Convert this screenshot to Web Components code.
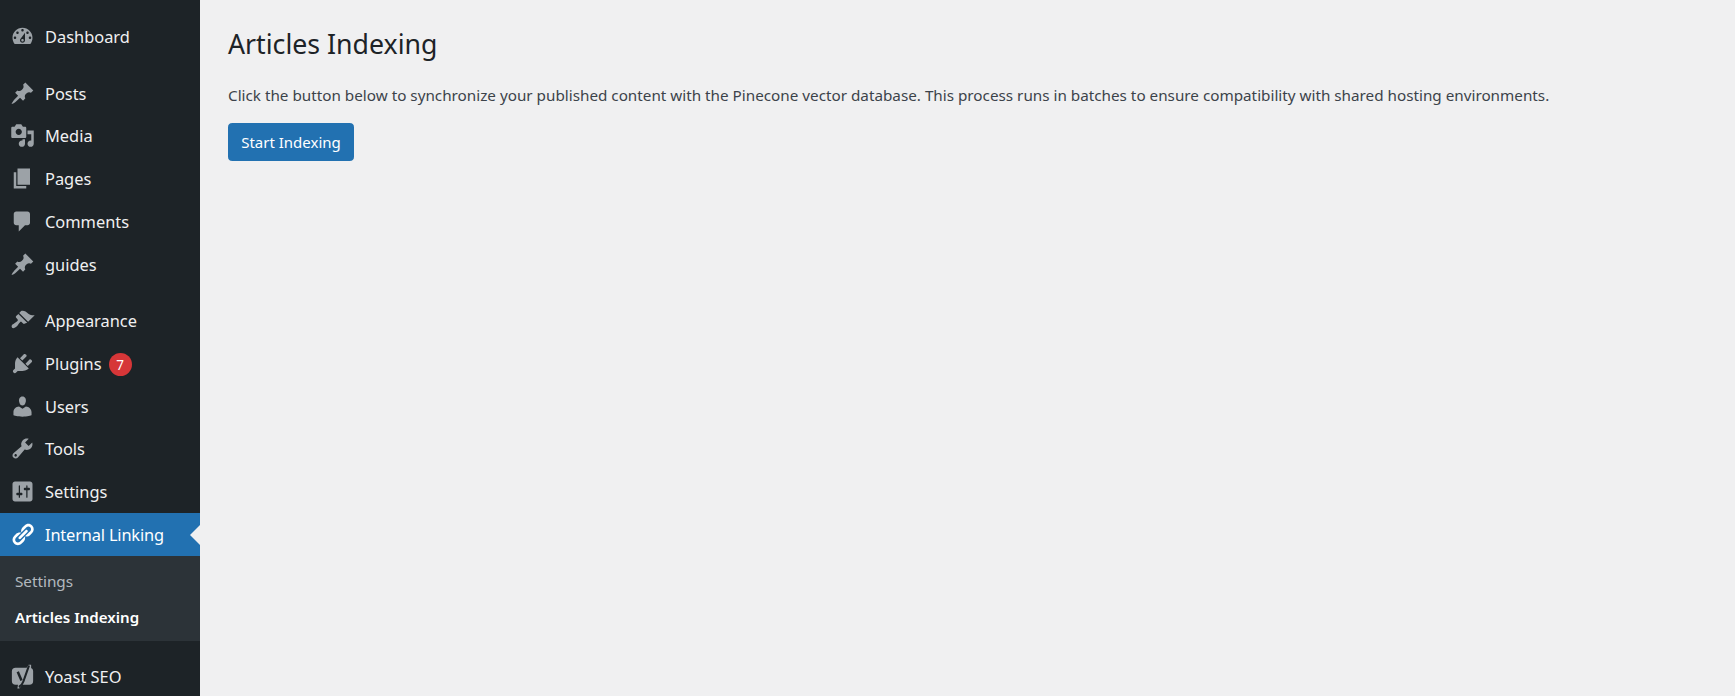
<!DOCTYPE html>
<html lang="en">
<head>
<meta charset="utf-8">
<title>Articles Indexing</title>
<style>
  html, body { margin: 0; height: 100%; overflow: hidden; background: #f0f0f1; }
  body { font-family: "Noto Sans", "Open Sans", sans-serif; }
</style>
</head>
<body>
<admin-shell>
  <admin-menu slot="menu">
    <menu-item icon="dashboard">Dashboard</menu-item>
    <menu-gap style="--gap: 14px"></menu-gap>
    <menu-item icon="post" style="--row: 42px">Posts</menu-item>
    <menu-item icon="media">Media</menu-item>
    <menu-item icon="page">Pages</menu-item>
    <menu-item icon="comments">Comments</menu-item>
    <menu-item icon="post">guides</menu-item>
    <menu-gap style="--gap: 13px"></menu-gap>
    <menu-item icon="appearance">Appearance</menu-item>
    <menu-item icon="plugins" badge="7">Plugins</menu-item>
    <menu-item icon="users" style="--row: 42px">Users</menu-item>
    <menu-item icon="tools">Tools</menu-item>
    <menu-item icon="settings">Settings</menu-item>
    <menu-item icon="links" active>Internal Linking</menu-item>
    <sub-menu>
      <sub-item>Settings</sub-item>
      <sub-item current>Articles Indexing</sub-item>
    </sub-menu>
    <menu-gap style="--gap: 14px"></menu-gap>
    <menu-item icon="yoast">Yoast SEO</menu-item>
  </admin-menu>
  <indexing-page heading="Articles Indexing">
    Click the button below to synchronize your published content with the Pinecone vector database. This process runs in batches to ensure compatibility with shared hosting environments.
    <primary-button slot="action">Start Indexing</primary-button>
  </indexing-page>
</admin-shell>

<script>
// dashicon paths, 20x20 box
const ICONS = {
  dashboard: '<path d="M3.76 16h12.48c1.1-1.37 1.76-3.11 1.76-5 0-4.42-3.58-8-8-8s-8 3.58-8 8c0 1.89.66 3.63 1.76 5zM10 4c.55 0 1 .45 1 1s-.45 1-1 1-1-.45-1-1 .45-1 1-1zM6 6c.55 0 1 .45 1 1s-.45 1-1 1-1-.45-1-1 .45-1 1-1zm8 0c.55 0 1 .45 1 1s-.45 1-1 1-1-.45-1-1 .45-1 1-1zm-5.37 5.55L12 7v6c0 1.1-.9 2-2 2s-2-.9-2-2c0-.57.24-1.08.63-1.45zM4 10c.55 0 1 .45 1 1s-.45 1-1 1-1-.45-1-1 .45-1 1-1zm12 0c.55 0 1 .45 1 1s-.45 1-1 1-1-.45-1-1 .45-1 1-1zm-5 3c0-.55-.45-1-1-1s-1 .45-1 1 .45 1 1 1 1-.45 1-1z"/>',
  post: '<path d="M10.44 3.02l1.82-1.82 6.36 6.35-1.83 1.82c-1.05-.68-2.48-.57-3.41.36l-.75.75c-.92.93-1.04 2.35-.35 3.41l-1.83 1.82-2.41-2.41-2.8 2.79c-.42.42-3.38 2.71-3.8 2.29s1.86-3.39 2.28-3.81l2.79-2.79L4.1 9.36l1.83-1.82c1.05.69 2.48.57 3.4-.36l.75-.75c.93-.92 1.05-2.35.36-3.41z"/>',
  media: '<path d="M13 11V4c0-.55-.45-1-1-1h-1.67L9 1H5L3.67 3H2c-.55 0-1 .45-1 1v7c0 .55.45 1 1 1h10c.55 0 1-.45 1-1zM7 4.5c1.38 0 2.5 1.12 2.5 2.5S8.38 9.5 7 9.5 4.5 8.38 4.5 7 5.62 4.5 7 4.5zM14 6h5v10.5c0 1.38-1.12 2.5-2.5 2.5S14 17.88 14 16.5s1.12-2.5 2.5-2.5c.17 0 .34.02.5.05V9h-3V6zm-4 8.05V13h2v3.5c0 1.38-1.12 2.5-2.5 2.5S7 17.88 7 16.5 8.12 14 9.5 14c.17 0 .34.02.5.05z"/>',
  page: '<path d="M6 15V2h10v13H6zm-1 1h8v2H3V5h2v11z"/>',
  comments: '<path d="M5 2h9c1.1 0 2 .9 2 2v7c0 1.1-.9 2-2 2h-2l-5 5v-5H5c-1.1 0-2-.9-2-2V4c0-1.1.9-2 2-2z"/>',
  appearance: '<path d="M14.48 11.06L7.41 3.99l1.5-1.5c.5-.56 2.3-.47 3.51.32 1.21.8 1.43 1.28 2.91 2.1 1.18.64 2.45 1.26 4.45.85zm-.71.71L6.7 4.7 4.93 6.47c-.39.39-.39 1.02 0 1.41l1.06 1.06c.39.39.39 1.03 0 1.42-.6.6-1.43 1.11-2.21 1.69-.35.26-.7.53-1.01.84C1.43 13.23.79 14.87 1.65 15.72c.86.86 2.5.22 3.84-1.12.31-.31.58-.66.84-1.01.58-.78 1.09-1.61 1.69-2.21.39-.39 1.03-.39 1.42 0l1.06 1.06c.39.39 1.02.39 1.41 0z"/>',
  plugins: '<path d="M13.11 4.36L9.87 7.6 8 5.73l3.24-3.24c.35-.34 1.05-.2 1.56.32.52.51.66 1.21.31 1.55zm-8 1.77l.91-1.12 9.01 9.01-1.19.84c-.71.71-2.63 1.16-3.82 1.16H6.14L4.9 17.26c-.59.59-1.54.59-2.12 0-.59-.58-.59-1.53 0-2.12l1.24-1.24v-3.88c0-1.13.4-3.19 1.09-3.89zm7.26 3.97l3.24-3.24c.34-.35 1.04-.21 1.55.31.52.51.66 1.21.31 1.55l-3.24 3.25z"/>',
  users: '<path d="M10 9.25c-2.27 0-2.73-3.44-2.73-3.44C7 4.02 7.82 2 9.97 2c2.16 0 2.98 2.02 2.71 3.81 0 0-.41 3.44-2.68 3.44zm0 2.57L12.72 10c2.39 0 4.52 2.33 4.52 4.53v2.49s-3.65 1.13-7.24 1.13c-3.65 0-7.24-1.13-7.24-1.13v-2.49c0-2.25 1.94-4.48 4.47-4.48z"/>',
  tools: '<path d="M16.68 9.77c-1.34 1.34-3.3 1.67-4.95.99l-5.41 6.52c-.99.99-2.59.99-3.58 0s-.99-2.59 0-3.57l6.52-5.42c-.68-1.65-.35-3.61.99-4.95 1.28-1.28 3.12-1.62 4.72-1.06l-2.89 2.89 2.82 2.82 2.86-2.87c.53 1.58.18 3.39-1.08 4.65zM3.81 16.21c.4.39 1.04.39 1.43 0 .4-.4.4-1.04 0-1.43-.39-.4-1.03-.4-1.43 0-.39.39-.39 1.03 0 1.43z"/>',
  settings: '<path d="M18 16V4c0-1.1-.9-2-2-2H4c-1.1 0-2 .9-2 2v12c0 1.1.9 2 2 2h12c1.1 0 2-.9 2-2zM8 11h1c.55 0 1 .45 1 1s-.45 1-1 1H8v1.5c0 .28-.22.5-.5.5s-.5-.22-.5-.5V13H6c-.55 0-1-.45-1-1s.45-1 1-1h1V5.5c0-.28.22-.5.5-.5s.5.22.5.5V11zm5-2h-1c-.55 0-1-.45-1-1s.45-1 1-1h1V5.5c0-.28.22-.5.5-.5s.5.22.5.5V7h1c.55 0 1 .45 1 1s-.45 1-1 1h-1v5.5c0 .28-.22.5-.5.5s-.5-.22-.5-.5V9z"/>',
  links: '<path d="M17.74 2.76c1.68 1.69 1.68 4.41 0 6.1l-1.53 1.52c-1.12 1.12-2.7 1.47-4.14 1.09l2.62-2.61.76-.77.76-.76c.84-.84.84-2.2 0-3.04-.84-.85-2.2-.85-3.04 0l-.77.76-3.38 3.38c-.37-1.44-.02-3.02 1.1-4.14l1.52-1.53c1.69-1.68 4.42-1.68 6.1 0zM8.59 13.43l5.34-5.34c.42-.42.42-1.1 0-1.52-.44-.43-1.13-.39-1.53 0l-5.33 5.34c-.42.42-.42 1.1 0 1.52.44.43 1.13.39 1.52 0zm-.76 2.29l4.14-4.15c.38 1.44.03 3.02-1.09 4.14l-1.52 1.53c-1.69 1.68-4.41 1.68-6.1 0-1.68-1.68-1.68-4.42 0-6.1l1.53-1.52c1.12-1.12 2.7-1.47 4.14-1.1l-4.14 4.15c-.85.84-.85 2.2 0 3.05.84.84 2.2.84 3.04 0z"/>',
  yoast: '<rect x="1.5" y="3" width="17" height="13.5" rx="3"/><path d="M13 3.5 14.9.5h2v3zM6.5 16l-.6 3.5h1.6l2.6-3.5z"/><path d="M6.2 6.2l3 7" fill="none" stroke="#1d2327" stroke-width="2"/><path d="M15.2 1.2 10.7 14c-.6 1.8-1.6 3.4-3.6 4.4" fill="none" stroke="#1d2327" stroke-width="1.7"/>'
}

customElements.define('admin-shell', class extends HTMLElement {
  constructor () {
    super()
    this.attachShadow({ mode: 'open' }).innerHTML = `
      <style>
        :host { display: grid; grid-template-columns: 200px 1fr; height: 696px; overflow: hidden; }
      </style>
      <slot name="menu"></slot>
      <slot></slot>
    `
  }
})

customElements.define('admin-menu', class extends HTMLElement {
  constructor () {
    super()
    this.attachShadow({ mode: 'open' }).innerHTML = `
      <style>
        :host { display: block; background: #1d2327; padding-top: 15px; height: 696px; overflow: hidden; box-sizing: border-box; }
      </style>
      <slot></slot>
    `
  }
})

customElements.define('menu-gap', class extends HTMLElement {
  constructor () {
    super()
    this.attachShadow({ mode: 'open' }).innerHTML = '<style>:host { display: block; height: var(--gap, 15px); }</style>'
  }
})

customElements.define('menu-item', class extends HTMLElement {
  constructor () {
    super()
    const badge = this.getAttribute('badge')
    this.attachShadow({ mode: 'open' }).innerHTML = `
      <style>
        :host {
          display: flex; align-items: center; position: relative;
          height: var(--row, 43px); color: #f0f0f1; font-size: 16.4px;
        }
        :host([active]) { background: #2271b1; color: #fff; letter-spacing: -.17px; }
        :host([active]) svg { fill: #fff; }
        :host([active])::after {
          content: ""; position: absolute; right: 0; top: 50%; margin-top: -10px;
          border: 10px solid transparent; border-left-width: 0; border-right-color: #f0f0f1;
        }
        svg { width: 25px; height: 25px; margin: 0 10px; flex: none; fill: #9ca2a7; }
        .badge {
          display: inline-flex; align-items: center; justify-content: center;
          width: 23px; height: 23px; border-radius: 50%; margin: 2px 0 0 7px;
          background: #d63638; color: #fff; font-size: 13.5px;
        }
      </style>
      <svg viewBox="0 0 20 20" aria-hidden="true">${ICONS[this.getAttribute('icon')]}</svg>
      <slot></slot>
      ${badge ? `<span class="badge">${badge}</span>` : ''}
    `
  }
})

customElements.define('sub-menu', class extends HTMLElement {
  constructor () {
    super()
    this.attachShadow({ mode: 'open' }).innerHTML = `
      <style>
        :host { display: block; background: #2c3338; padding: 7px 0 6px; }
      </style>
      <slot></slot>
    `
  }
})

customElements.define('sub-item', class extends HTMLElement {
  constructor () {
    super()
    this.attachShadow({ mode: 'open' }).innerHTML = `
      <style>
        :host {
          display: flex; align-items: center; height: 36px; padding-left: 15px;
          color: rgba(240, 246, 252, .7); font-size: 15.25px;
        }
        :host([current]) { color: #fff; font-weight: 600; font-size: 15.1px; }
      </style>
      <slot></slot>
    `
  }
})

customElements.define('indexing-page', class extends HTMLElement {
  constructor () {
    super()
    this.attachShadow({ mode: 'open' }).innerHTML = `
      <style>
        :host { display: block; padding: 25px 28px; color: #3c434a; font-size: 15.25px; }
        h1 { margin: 0 0 19px; font-size: 26.7px; font-weight: 400; line-height: 38px; color: #1d2327; }
        p { margin: 0 0 15px; line-height: 26px; }
      </style>
      <h1>${this.getAttribute('heading')}</h1>
      <p><slot></slot></p>
      <slot name="action"></slot>
    `
  }
})

customElements.define('primary-button', class extends HTMLElement {
  constructor () {
    super()
    this.attachShadow({ mode: 'open' }).innerHTML = `
      <style>
        :host {
          display: inline-flex; align-items: center; justify-content: center;
          width: 126px; height: 38px; box-sizing: border-box; border-radius: 3.75px;
          background: #2271b1; border: 1px solid #2271b1; color: #fff; font-size: 15px;
        }
      </style>
      <slot></slot>
    `
  }
})
</script>
</body>
</html>
